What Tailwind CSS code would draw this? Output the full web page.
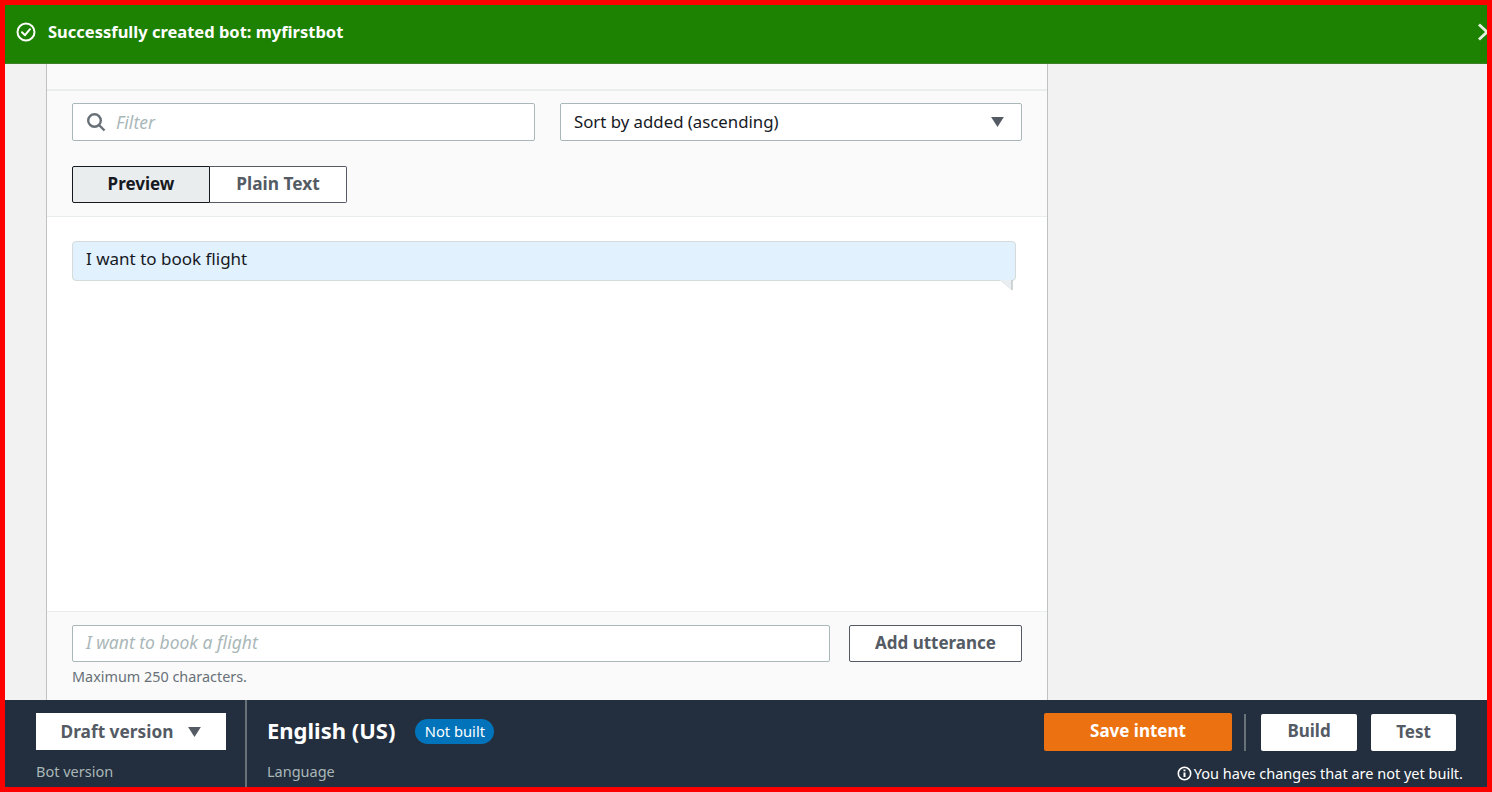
<!DOCTYPE html>
<html lang="en">
  <head>
    <meta charset="UTF-8">
    <title>Intent editor</title>
    <script src="https://cdn.jsdelivr.net/npm/@tailwindcss/browser@4"></script>
  </head>
  <body class="m-0 overflow-hidden font-['Noto_Sans',sans-serif]">
    <div class="h-[792px] w-[1492px] border-[5px] border-[#ff0000] bg-[#f2f2f2] flex flex-col overflow-hidden">
      <!-- Flash banner -->
      <div class="h-[59px] shrink-0 bg-[#1d8102] border-b border-[#3f7f2a] flex items-center justify-between pl-[11px] pb-[4px] overflow-hidden">
        <div class="flex items-center gap-[12px] text-white">
          <svg class="w-[20px] h-[20px]" viewBox="0 0 20 20" fill="none" stroke="#fff" stroke-width="2"><circle cx="10" cy="10" r="8.5"/><path d="M6 10.2l3 3 5-6" stroke-linecap="round" stroke-linejoin="round"/></svg>
          <span class="text-[16.5px] font-bold leading-none">Successfully created bot: myfirstbot</span>
        </div>
        <svg class="w-[12px] h-[18px] mr-[-2px] shrink-0" viewBox="0 0 12 18" fill="none" stroke="#e6f2e0" stroke-width="2.8"><path d="M2 1.5l8 7.5-8 7.5"/></svg>
      </div>

      <!-- Panel -->
      <div class="flex-1 min-h-0 pl-[41px]">
        <div class="w-[1002px] h-full bg-white border-x border-[#c0c2c2] flex flex-col">
          <div class="h-[27px] shrink-0 bg-[#fafafa] border-b-2 border-[#eaeded]"></div>
          <div class="h-[126px] shrink-0 bg-[#fafafa] border-b border-[#eaeded] px-[25px] pt-[12px]">
            <div class="flex gap-[25px]">
              <div class="w-[463px] h-[38px] bg-white border border-[#aab7b8] rounded-[2px] flex items-center pl-[13px] gap-[10px]">
                <svg class="w-[20px] h-[20px]" viewBox="0 0 20 20" fill="none" stroke="#687078" stroke-width="2.4"><circle cx="8.5" cy="8.5" r="6.3"/><path d="M13 13l5.5 5.5"/></svg>
                <span class="text-[17.5px] italic text-[#aab7b8]">Filter</span>
              </div>
              <div class="w-[462px] h-[38px] bg-white border border-[#aab7b8] rounded-[2px] flex items-center justify-between pl-[13px] pr-[17px]">
                <span class="text-[16.8px] text-[#16191f]">Sort by added (ascending)</span>
                <svg class="w-[13px] h-[10px]" viewBox="0 0 14 11" fill="#545b64"><path d="M0 0h14L7 11z"/></svg>
              </div>
            </div>
            <div class="flex mt-[25px] w-[275px] h-[37px]">
              <div class="w-[138px] bg-[#eaeded] border border-[#16191f] rounded-l-[2px] flex items-center justify-center pb-[2px] text-[17px] font-bold text-[#16191f]">Preview</div>
              <div class="w-[137px] bg-white border border-l-0 border-[#545b64] rounded-r-[2px] flex items-center justify-center pb-[2px] text-[17.3px] font-bold text-[#545b64]">Plain Text</div>
            </div>
          </div>

          <!-- Utterances -->
          <div class="h-[394px] shrink-0 bg-white px-[25px] pt-[24px]">
            <div class="relative w-[944px] h-[40px] bg-[#e1f1fd] border border-[#d5dbdb] rounded-[4px] flex items-center pl-[13px] pb-[4px]">
              <span class="text-[17px] text-[#16191f]">I want to book flight</span>
              <svg class="absolute right-[2px] top-[38px] w-[13px] h-[11px]" viewBox="0 0 13 11"><path d="M0 0h12v10z" fill="#e8eef2"/><path d="M0 0l12 10" stroke="#e3e7e7" stroke-width="1"/><path d="M12 0v10" stroke="#c4cccc" stroke-width="1.6"/></svg>
            </div>
          </div>

          <!-- Add utterance -->
          <div class="flex-1 bg-[#fafafa] border-t border-[#eaeded] px-[25px] pt-[13px]">
            <div class="flex gap-[19px]">
              <div class="w-[758px] h-[37px] bg-white border border-[#aab7b8] rounded-[2px] flex items-center pl-[13px] pb-[2px]">
                <span class="text-[17.5px] italic text-[#aab7b8]">I want to book a flight</span>
              </div>
              <div class="w-[173px] h-[37px] bg-white border border-[#545b64] rounded-[2px] flex items-center justify-center pb-[2px] text-[17px] font-bold text-[#545b64]">Add utterance</div>
            </div>
            <div class="mt-[6px] text-[14.4px] leading-[18px] text-[#687078]">Maximum 250 characters.</div>
          </div>
        </div>
      </div>

      <!-- Bottom bar -->
      <div class="h-[87px] shrink-0 bg-[#232f3e] flex">
        <div class="w-[242px] h-full border-r-2 border-[#687078] pl-[31px] pt-[13px]">
          <div class="w-[190px] h-[37px] bg-white flex items-center justify-center gap-[15px] text-[17.3px] font-bold text-[#545b64]">
            <span>Draft version</span>
            <svg class="w-[13px] h-[10px]" viewBox="0 0 14 11" fill="#545b64"><path d="M0 0h14L7 11z"/></svg>
          </div>
          <div class="mt-[12px] text-[14.5px] leading-[18px] text-[#aab7b8]">Bot version</div>
        </div>
        <div class="pl-[20px] pt-[13px]">
          <div class="h-[37px] flex items-center gap-[20px] pb-[2px]">
            <span class="text-[22px] font-bold text-white">English (US)</span>
            <span class="h-[25px] w-[79px] mt-[2px] rounded-full bg-[#0073bb] flex items-center justify-center text-[14.7px] text-white">Not built</span>
          </div>
          <div class="mt-[12px] text-[14.5px] leading-[18px] text-[#aab7b8]">Language</div>
        </div>
        <div class="ml-auto pr-[31px] pt-[13px] flex flex-col items-end">
          <div class="flex items-center h-[38px]">
            <div class="w-[188px] h-[38px] bg-[#ec7211] rounded-[2px] flex items-center justify-center pb-[2px] text-[17px] font-bold text-white">Save intent</div>
            <div class="w-[2px] h-[37px] bg-[#687078] ml-[12px] mr-[15px]"></div>
            <div class="w-[96px] h-[37px] bg-white rounded-[2px] flex items-center justify-center pb-[2px] text-[17px] font-bold text-[#545b64]">Build</div>
            <div class="w-[85px] h-[37px] bg-white rounded-[2px] flex items-center justify-center text-[17px] font-bold text-[#545b64] ml-[14px]">Test</div>
          </div>
          <div class="mt-[13px] flex items-center gap-[2px] text-[14.5px] leading-[18px] text-white mr-[-7px]">
            <svg class="w-[15px] h-[15px]" viewBox="0 0 15 15" fill="none" stroke="#fff" stroke-width="1.6"><circle cx="7.5" cy="7.5" r="6.2"/><path d="M7.5 6.5v4.5M7.5 3.6v1.6" stroke-width="2"/></svg>
            <span>You have changes that are not yet built.</span>
          </div>
        </div>
      </div>
    </div>
  </body>
</html>
